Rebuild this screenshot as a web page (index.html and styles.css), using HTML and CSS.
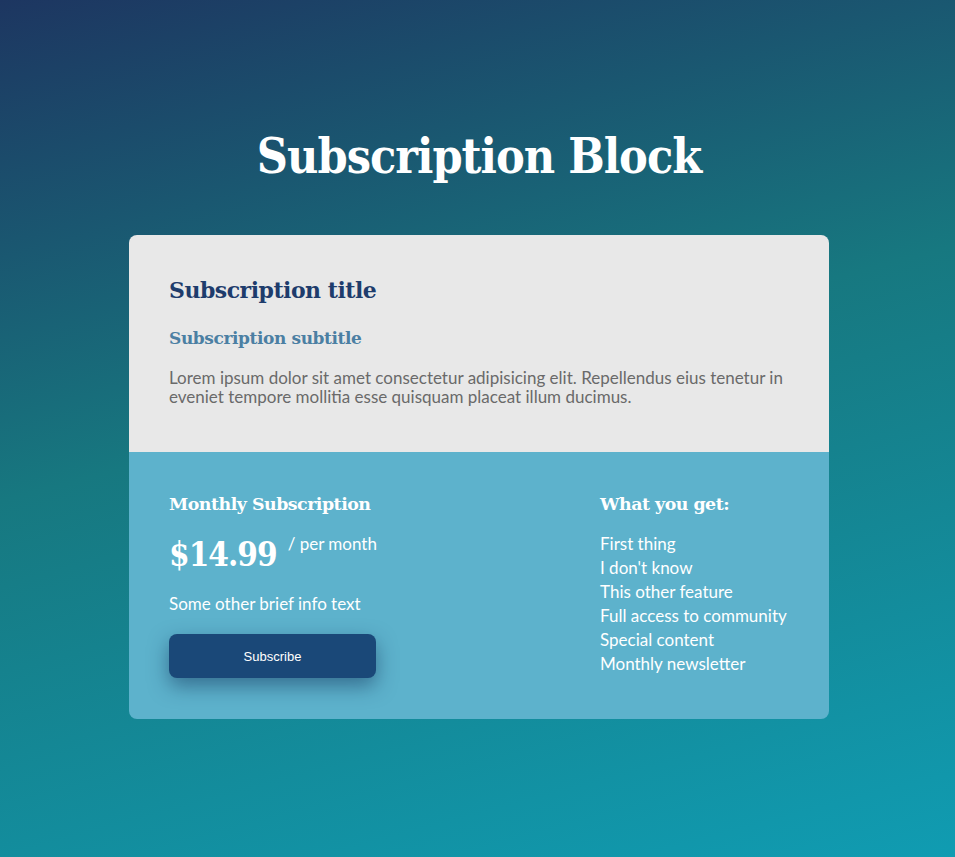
FILE: index.html
```html
<!DOCTYPE html>
<html lang="en">
<head>
<meta charset="utf-8">
<title>Subscription Block</title>
<link rel="stylesheet" href="styles.css">
</head>
<body>
<main class="page">
  <h1 class="page-title">Subscription Block</h1>
  <section class="card">
    <div class="card-top">
      <h2 class="card-title">Subscription title</h2>
      <h3 class="card-subtitle">Subscription subtitle</h3>
      <p class="card-text">Lorem ipsum dolor sit amet consectetur adipisicing elit. Repellendus eius tenetur in eveniet tempore mollitia esse quisquam placeat illum ducimus.</p>
    </div>
    <div class="card-bottom">
      <div class="plan">
        <h4 class="col-title">Monthly Subscription</h4>
        <div class="price-row">
          <span class="price">$14.99</span>
          <span class="period">/ per month</span>
        </div>
        <p class="info">Some other brief info text</p>
        <button class="btn" type="button">Subscribe</button>
      </div>
      <div class="features">
        <h4 class="col-title">What you get:</h4>
        <ul class="feature-list">
          <li>First thing</li>
          <li>I don't know</li>
          <li>This other feature</li>
          <li>Full access to community</li>
          <li>Special content</li>
          <li>Monthly newsletter</li>
        </ul>
      </div>
    </div>
  </section>
</main>
</body>
</html>
```
FILE: styles.css
```css
* { box-sizing: border-box; }
html, body { margin: 0; padding: 0; }
body {
  min-height: 857px;
  background: linear-gradient(165deg, #1d3661 0%, #177880 45%, #109cb2 100%);
  font-family: "Lato", "Open Sans", sans-serif;
  color: #fff;
}
.page {
  display: flex;
  flex-direction: column;
  align-items: center;
  padding-top: 118px;
  padding-left: 3px;
  padding-bottom: 139px;
}
.page-title {
  margin: 0;
  font-family: "DejaVu Serif Condensed", "DejaVu Serif", serif;
  font-stretch: condensed;
  font-weight: 700;
  font-size: 48px;
  line-height: 76px;
  color: #fff;
  letter-spacing: -1px;
}
.card {
  width: 700px;
  margin-top: 41px;
  border-radius: 8px;
  overflow: hidden;
}
.card-top {
  background: #e8e8e8;
  padding: 40px 40px 46px;
}
.card-title {
  margin: 0;
  font-family: "DejaVu Serif", serif;
  font-weight: 700;
  font-size: 22px;
  line-height: 30px;
  color: #1e3c6c;
  letter-spacing: -0.5px;
}
.card-subtitle {
  margin: 21px 0 0;
  font-family: "DejaVu Serif", serif;
  font-weight: 700;
  font-size: 17px;
  line-height: 24px;
  color: #4b7fa3;
  letter-spacing: -0.4px;
}
.card-text {
  margin: 18px 0 0;
  font-size: 17px;
  line-height: 19px;
  color: #6a6a6a;
}
.card-bottom {
  background: #5db2cc;
  padding: 39px 40px 41px;
  display: flex;
  justify-content: space-between;
}
.col-title {
  margin: 0;
  font-family: "DejaVu Serif", serif;
  font-weight: 700;
  font-size: 17.4px;
  line-height: 26px;
  color: #fff;
  letter-spacing: -0.5px;
}
.price-row {
  display: flex;
  align-items: flex-start;
  gap: 11px;
  margin-top: 17px;
}
.price {
  font-family: "DejaVu Serif Condensed", "DejaVu Serif", serif;
  font-stretch: condensed;
  font-weight: 700;
  font-size: 33px;
  line-height: 42px;
  letter-spacing: -1px;
}
.period {
  font-size: 17px;
  line-height: 20px;
}
.info {
  margin: 18px 0 0;
  font-size: 17px;
  line-height: 20px;
}
.btn {
  margin-top: 20px;
  width: 207px;
  height: 44px;
  border: 0;
  border-radius: 8px;
  background: #1a4878;
  color: #fff;
  font-family: "Liberation Sans", Arial, sans-serif;
  font-size: 13px;
  box-shadow: 0 8px 20px rgba(15, 45, 85, 0.5);
}
.features {
  width: 189px;
}
.feature-list {
  list-style: none;
  margin: 15px 0 0;
  padding: 0;
  font-size: 17px;
  line-height: 24px;
}
```
